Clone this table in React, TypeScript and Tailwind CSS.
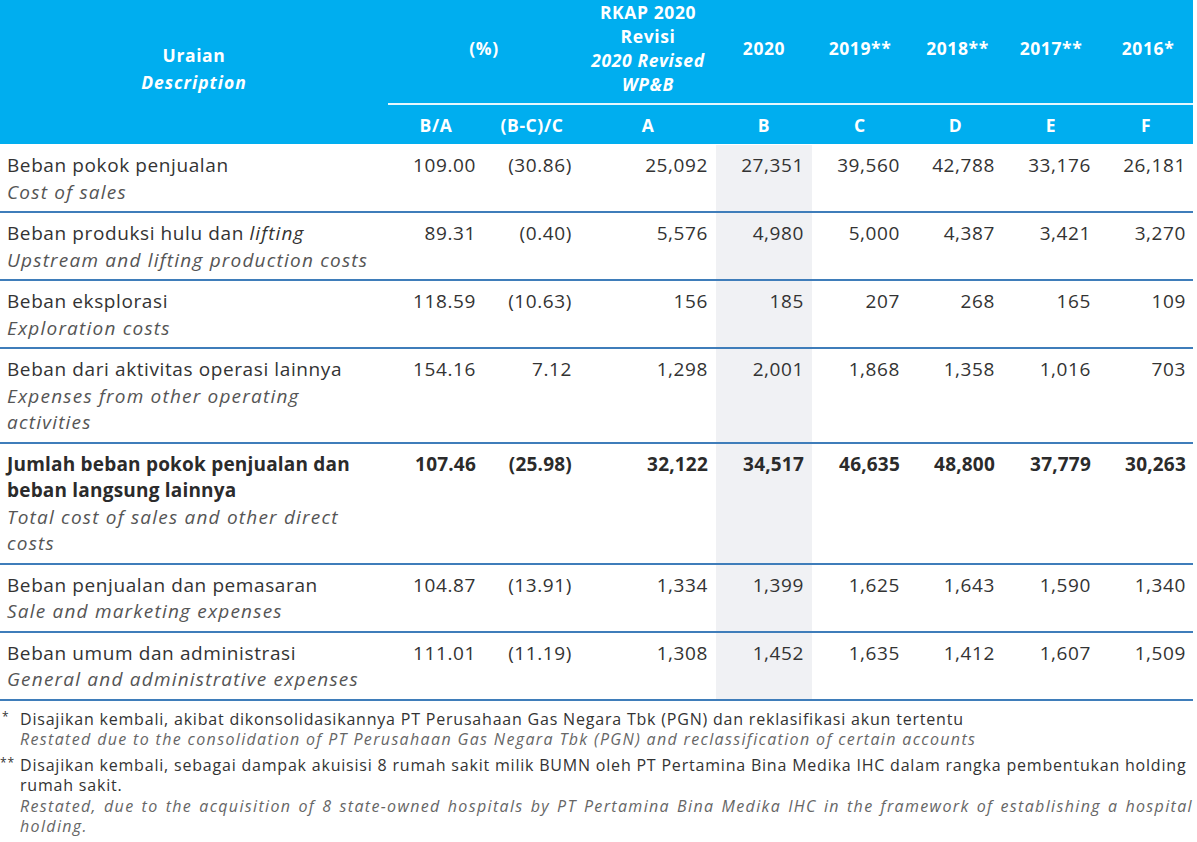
import React from "react";

type Row = {
  id: string;
  en: React.ReactNode;
  vals: string[];
  bold?: boolean;
};

const rows: Row[] = [
  { id: "Beban pokok penjualan", en: "Cost of sales", vals: ["109.00", "(30.86)", "25,092", "27,351", "39,560", "42,788", "33,176", "26,181"] },
  { id: "Beban produksi hulu dan <i>lifting</i>", en: "Upstream and lifting production costs", vals: ["89.31", "(0.40)", "5,576", "4,980", "5,000", "4,387", "3,421", "3,270"] },
  { id: "Beban eksplorasi", en: "Exploration costs", vals: ["118.59", "(10.63)", "156", "185", "207", "268", "165", "109"] },
  { id: "Beban dari aktivitas operasi lainnya", en: "Expenses from other operating activities", vals: ["154.16", "7.12", "1,298", "2,001", "1,868", "1,358", "1,016", "703"] },
  { id: "Jumlah beban pokok penjualan dan beban langsung lainnya", en: "Total cost of sales and other direct costs", vals: ["107.46", "(25.98)", "32,122", "34,517", "46,635", "48,800", "37,779", "30,263"], bold: true },
  { id: "Beban penjualan dan pemasaran", en: "Sale and marketing expenses", vals: ["104.87", "(13.91)", "1,334", "1,399", "1,625", "1,643", "1,590", "1,340"] },
  { id: "Beban umum dan administrasi", en: "General and administrative expenses", vals: ["111.01", "(11.19)", "1,308", "1,452", "1,635", "1,412", "1,607", "1,509"] },
];

const cols = "grid grid-cols-[388px_96px_96px_136px_96px_96px_95px_96px_94px]";

function Desc({ r }: { r: Row }) {
  const parts = r.id.split(/<i>|<\/i>/);
  return (
    <div className="pl-[7px] pr-[8px] pt-[7px] pb-[6px]">
      <div className={r.bold ? "max-w-[362px]" : ""}>
        <div className={r.bold ? "font-bold text-[#2b2b2b] tracking-[0.2px]" : "text-[#333] tracking-[0.6px]"}>
          {parts.map((p, i) => (i % 2 === 1 ? <i key={i} className="tracking-[1.1px]">{p}</i> : <span key={i}>{p}</span>))}
        </div>
        <div className="italic text-[#555] tracking-[1.2px]">{r.en}</div>
      </div>
    </div>
  );
}

export default function App() {
  return (
    <div className="w-[1197px] h-[842px] bg-white overflow-hidden" style={{ fontFamily: '"Open Sans", "Noto Sans", sans-serif' }}>
      <div className="w-[1193px]">
        {/* Header */}
        <div className="bg-[#00aeef] text-white font-bold text-[17.5px] leading-[24px] tracking-[0.6px] flex">
          <div className="w-[388px] shrink-0 flex flex-col items-center justify-center leading-[27px] pb-[7px]">
            <div>Uraian</div>
            <div className="italic tracking-[1px]">Description</div>
          </div>
          <div className="flex-1">
            <div className="grid grid-cols-[96px_96px_136px_96px_96px_95px_96px_94px] h-[103px] pb-[7px]">
              <div className="col-span-2 flex items-center justify-center">(%)</div>
              <div className="flex flex-col items-center justify-center text-center">
                <div>RKAP 2020</div>
                <div>Revisi</div>
                <div className="italic">2020 Revised</div>
                <div className="italic">WP&amp;B</div>
              </div>
              <div className="flex items-center justify-center">2020</div>
              <div className="flex items-center justify-center">2019**</div>
              <div className="flex items-center justify-center pl-[4px]">2018**</div>
              <div className="flex items-center justify-center">2017**</div>
              <div className="flex items-center justify-center pl-[4px]">2016*</div>
            </div>
            <div className="h-[2px] bg-white/90" />
            <div className="grid grid-cols-[96px_96px_136px_96px_96px_95px_96px_94px] h-[39px] items-center text-center">
              <div>B/A</div>
              <div>(B-C)/C</div>
              <div>A</div>
              <div>B</div>
              <div>C</div>
              <div>D</div>
              <div>E</div>
              <div>F</div>
            </div>
          </div>
        </div>

        {/* Body */}
        <div className="text-[19px] leading-[26.5px] text-[#333] pt-[1px]">
          {rows.map((r, i) => (
            <div key={i} className={cols + " border-b-2 border-[#3f7dba]"}>
              <Desc r={r} />
              {r.vals.map((v, j) => (
                <div
                  key={j}
                  className={
                    "text-right pt-[7px] " +
                    (j === 7 ? "pr-[7px] " : "pr-[8px] ") +
                    (j === 3 ? "bg-[#f0f1f4] " : "") +
                    (r.bold ? "font-bold text-[#2b2b2b] tracking-[0.2px]" : "tracking-[0.6px]")
                  }
                >
                  {v}
                </div>
              ))}
            </div>
          ))}
        </div>

        {/* Footnotes */}
        <div className="pt-[8px] text-[16px] leading-[20.5px] text-[#333] tracking-[0.8px]">
          <div className="flex">
            <div className="w-[20px] pl-[2px] shrink-0 text-[12px] leading-[16px]">*</div>
            <div>
              <div>Disajikan kembali, akibat dikonsolidasikannya PT Perusahaan Gas Negara Tbk (PGN) dan reklasifikasi akun tertentu</div>
              <div className="italic text-[#666] tracking-[1.35px]">Restated due to the consolidation of PT Perusahaan Gas Negara Tbk (PGN) and reclassification of certain accounts</div>
            </div>
          </div>
          <div className="flex mt-[5px]">
            <div className="w-[20px] shrink-0 text-[12px] leading-[16px]">**</div>
            <div>
              <div>Disajikan kembali, sebagai dampak akuisisi 8 rumah sakit milik BUMN oleh PT Pertamina Bina Medika IHC dalam rangka pembentukan holding rumah sakit.</div>
              <div className="italic text-[#666] text-justify tracking-[1.35px]">Restated, due to the acquisition of 8 state-owned hospitals by PT Pertamina Bina Medika IHC in the framework of establishing a hospital holding.</div>
            </div>
          </div>
        </div>
      </div>
    </div>
  );
}
